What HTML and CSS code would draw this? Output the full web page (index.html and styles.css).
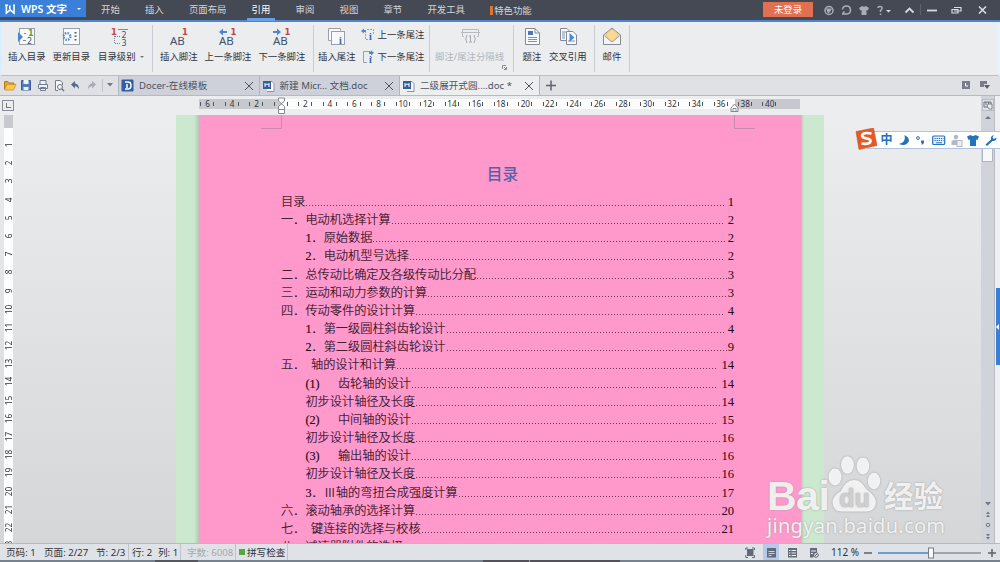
FILE: index.html
```html
<!DOCTYPE html>
<html lang="zh-CN">
<head>
<meta charset="utf-8">
<title>WPS 文字</title>
<link rel="stylesheet" href="styles.css">
</head>
<body>
<div class="app">
  <header class="titlebar">
    <div class="brand">
      <svg width="14" height="12" viewBox="0 0 14 12"><path d="M1 2.200H4M2.400 2.500V10L6.200 6.800L10 10V2.500M5.800 2.500V6M9 2.200H11" fill="none" stroke="#fff" stroke-width="1.600"/></svg>
      <b>WPS 文字</b>
      <i class="caret"></i>
    </div>
    <nav class="menu">
      <span>开始</span><span>插入</span><span>页面布局</span><span class="active">引用</span><span>审阅</span><span>视图</span><span>章节</span><span>开发工具</span><span class="special">特色功能</span>
    </nav>
    <div class="account">未登录</div>
    <svg class="winicons" width="187" height="20" viewBox="0 0 187 20" fill="none" stroke="#a9adb5" stroke-width="1.5">
      <circle cx="16" cy="10.500" r="4"/><path d="M13 8.500H19L17 12L15 13.500Z" fill="#a9adb5" stroke="none"/>
      <path d="M29 14H34A4 4 0 1 0 29.500 9.500M29.500 14L31.500 11.500"/>
      <path d="M46 8L49 6Q51 7.500 53 6L56 8L54.500 10.500L53.500 10V15H48.500V10L47.500 10.500Z" fill="#a9adb5" stroke="none"/>
      <path d="M65 8Q65 6.500 67 6.500Q69.500 6.500 69 8.700Q68.800 9.700 67.500 10.500V12M67.500 13.500V15"/><path d="M73 10H78L75.500 12.500Z" fill="#d8dade" stroke="none"/>
      <path d="M92.500 12.500L96.500 8.500L100.500 12.500" stroke="#d8dade" stroke-width="1.800"/><path d="M107.500 4V15" stroke="#5c616b" stroke-width="1"/>
      <path d="M114 10.500H124" stroke="#d8dade" stroke-width="1.800"/>
      <path d="M141 7.500H148V11H141M139 9.500H145V13H139Z" stroke="#d8dade" stroke-width="1.200"/>
      <path d="M166 6.500L173 13.500M173 6.500L166 13.500" stroke="#d8dade" stroke-width="1.700"/>
    </svg>
  </header>

  <section class="ribbon">
    <div class="group g1">
      <div class="tool"><svg width="20" height="20" viewBox="0 0 20 20"><rect x="2.500" y="1.500" width="15" height="16" fill="#f8f9fb" stroke="#9a9fa9"/><path d="M1 5L6 10L1 15Z" fill="#4f86d4"/><text x="11" y="8.500" class="ico green">1</text><text x="10" y="16.500" class="ico">2</text><path d="M7 6.500H9M6 13.500H9" stroke="#7b8aa0"/></svg><span>插入目录</span></div>
      <div class="tool"><svg width="20" height="20" viewBox="0 0 20 20"><rect x="2.500" y="1.500" width="16" height="16" fill="#f8f9fb" stroke="#9a9fa9"/><circle cx="6" cy="9.500" r="3.400" fill="none" stroke="#4f86d4" stroke-width="2.200" stroke-dasharray="1.500 1.170"/><path d="M14.500 5V14" stroke="#56647c" stroke-width="2" stroke-dasharray="1.500 2"/></svg><span>更新目录</span></div>
      <div class="tool wide"><svg width="20" height="20" viewBox="0 0 20 20"><text x="1" y="7.500" class="ico red">1</text><text x="11.500" y="10.500" class="ico">2</text><text x="11.500" y="18.500" class="ico">3</text><path d="M8 2.500H18" stroke="#5f91cf"/><path d="M4.500 9V16.500M5 9.500H10M5 16.500H10" stroke="#747d8b" stroke-dasharray="1 1"/></svg><span>目录级别<i class="caret"></i></span></div>
    </div>
    <div class="group g2">
      <div class="tool"><svg width="20" height="20" viewBox="0 0 20 20"><text x="1" y="17.500" class="ab">AB</text><text x="13" y="7.500" class="ico red">1</text></svg><span>插入脚注</span></div>
      <div class="tool"><svg width="20" height="20" viewBox="0 0 20 20"><text x="1" y="17.500" class="ab">AB</text><text x="12.500" y="7.500" class="ico red">1</text><path d="M1 5L5 1.500V4H9V6H5V8.500Z" fill="#4f86d4"/></svg><span>上一条脚注</span></div>
      <div class="tool"><svg width="20" height="20" viewBox="0 0 20 20"><text x="1" y="17.500" class="ab">AB</text><text x="12.500" y="7.500" class="ico red">1</text><path d="M9 5L5 1.500V4H1V6H5V8.500Z" fill="#4f86d4"/></svg><span>下一条脚注</span></div>
    </div>
    <div class="group g3">
      <div class="tool"><svg width="20" height="20" viewBox="0 0 20 20"><path d="M13.500 3.500V1.500H1.500V13.500H4" fill="#f8f9fb" stroke="#9a9fa9"/><rect x="4.500" y="4.500" width="13" height="13" fill="#f8f9fb" stroke="#9a9fa9"/><text x="12" y="17" class="info">i</text></svg><span>插入尾注</span></div>
      <div class="stack">
        <div><svg width="14" height="14" viewBox="0 0 14 14"><path d="M4.500 3V11.500H7M6 1.500H12.500V6" fill="none" stroke="#9a9fa9" stroke-dasharray="2 1"/><path d="M0 3L3 .5V2H5V4H3V5.500Z" fill="#4f86d4"/><text x="8" y="12" class="info">i</text></svg>上一条尾注</div>
        <div><svg width="14" height="14" viewBox="0 0 14 14"><path d="M6 12.500H2.500V1.500H9M10.500 7V8" fill="none" stroke="#9a9fa9"/><path d="M8 1.500H10V.2L13 2.800L10 5.500V4H8Z" fill="#4f86d4"/><text x="8" y="13" class="info">i</text></svg>下一条尾注</div>
      </div>
    </div>
    <div class="group g4">
      <div class="tool off"><svg width="20" height="20" viewBox="0 0 20 20" fill="none" stroke="#b8bbc1"><path d="M4 9.500H2.500V2.500H18.500V9.500H17M1 5.500H20"/><path d="M7 8Q4.500 12 7 16M14 8Q16.500 12 14 16M9 9.500L10.500 8.500V15M9 15H12" stroke="#a7aab1"/></svg><span>脚注/尾注分隔线</span></div>
      <svg class="launcher" width="5" height="5" viewBox="0 0 5 5"><path d="M.5 4V.5H4M2 2L4 4M4.500 2V4.500H2" fill="none" stroke="#6b707a" stroke-width=".8"/></svg>
    </div>
    <div class="group g5">
      <div class="tool"><svg width="20" height="20" viewBox="0 0 20 20"><path d="M3.500 1.500H13L17.500 6V17.500H3.500Z" fill="#f8f9fb" stroke="#858b96"/><path d="M13 1.500V6H17.500" fill="none" stroke="#858b96"/><path d="M6 4H11V8H6Z" fill="#4f76b8"/><path d="M6 10.500H15M6 12.500H15M6 14.500H15" stroke="#7a92b8"/></svg><span>题注</span></div>
      <div class="tool"><svg width="20" height="20" viewBox="0 0 20 20"><path d="M2.500 1.500H9L12.500 5V13.500H2.500Z" fill="#f8f9fb" stroke="#858b96"/><path d="M8.500 4.500H15L18.500 8V17.500H8.500Z" fill="#f8f9fb" stroke="#858b96"/><path d="M4 5H8M4 7H7M4 9H7M4 11H7M10 14H17" stroke="#7a92b8"/><path d="M11.500 6L16.500 10.500L11.500 15Z" fill="#4f86d4"/></svg><span>交叉引用</span></div>
    </div>
    <div class="group g6">
      <div class="tool"><svg width="20" height="20" viewBox="0 0 20 20"><path d="M1.500 8L10 1L18.500 8V17.500H1.500Z" fill="#f4f5f7" stroke="#858b96"/><path d="M4 7L10 2L16 7V10L10 15L4 10Z" fill="#f9d996" stroke="#dfad59" stroke-width=".7"/><path d="M1.500 8L10 15L18.500 8" fill="none" stroke="#858b96" stroke-width=".7"/></svg><span>邮件</span></div>
    </div>
  </section>

  <section class="tabs">
    <svg class="quick" width="118" height="19" viewBox="0 0 118 19" fill="none">
      <path d="M4.500 13V5.500H8L9.500 7H14V9" fill="#e7a129" stroke="#b97b20"/><path d="M4.500 14L7 8.500H16L13.500 14Z" fill="#ffc94d" stroke="#cf9130" stroke-width=".8"/>
      <path d="M21.500 4.500H30.500V14H21.500Z" fill="#527abc" stroke="#3d609d"/><path d="M23.500 4V8H28.500V4M23.500 14V11H28.500V14" fill="#eef3fa"/>
      <path d="M40 8V4.500H46V8M38.500 8.500H47.500V12.500H38.500ZM40.500 11.500H45.500V14.500H40.500Z" stroke="#6e7d93" fill="#eef1f5"/>
      <path d="M62.500 9V6.500L60 4.500H55.500V14.500H58" fill="#f6f7f9" stroke="#767c88"/><circle cx="60" cy="11" r="2.500" stroke="#6a7280"/><path d="M62 13L64 15" stroke="#6a7280" stroke-width="1.500"/>
      <path d="M71 8.500L75 5V7.500Q79 8 79 13Q77 10 75 10V12.500Z" fill="#59698a"/>
      <path d="M96 8.500L92 5V7.500Q88 8 88 13Q90 10 92 10V12.500Z" fill="#a6abb5"/>
      <path d="M102.500 3V16" stroke="#c0c4cd"/><path d="M107 7H113L110 10.500Z" fill="#747984"/>
    </svg>
    <div class="tab"><svg width="13" height="13" viewBox="0 0 13 13"><rect x=".5" y=".5" width="12" height="12" rx="1" fill="#315f9f"/><path d="M4 3H7Q10 3 10 6.500T7 10H4M6 5V9" stroke="#fff" stroke-width="1.500" fill="none"/></svg><span>Docer-在线模板</span><i class="close"></i></div>
    <div class="tab doc"><svg width="13" height="13" viewBox="0 0 13 13"><path d="M5.500 2.500H10L12 4.500V12.500H5" fill="#f7f8fa" stroke="#8c929d"/><rect x="1" y="2" width="8" height="8" fill="#315f9f"/><path d="M3 4V8M7 4V8M3 6L5 5L7 6" stroke="#fff" fill="none"/></svg><span>新建 Micr... 文档.doc</span><i class="close"></i></div>
    <div class="tab doc current"><svg width="13" height="13" viewBox="0 0 13 13"><path d="M5.500 2.500H10L12 4.500V12.500H5" fill="#f7f8fa" stroke="#8c929d"/><rect x="1" y="2" width="8" height="8" fill="#315f9f"/><path d="M3 4V8M7 4V8M3 6L5 5L7 6" stroke="#fff" fill="none"/></svg><span>二级展开式圆....doc *</span><i class="close"></i></div>
    <svg width="20" height="19" viewBox="0 0 20 19"><path d="M6 9.500H16M11 4.500V14.500" stroke="#5c6370" stroke-width="1.500"/></svg>
    <svg class="tabtools" width="34" height="19" viewBox="0 0 34 19"><rect x="2" y="5" width="8" height="8" fill="#777d8b"/><path d="M5.500 7V10H8" stroke="#fff" fill="none"/><path d="M20 5H27V8H24V11H20Z" fill="#777d8b"/><path d="M24 9H30L27 13Z" fill="#565d6c"/></svg>
  </section>

  <main class="work">
    <aside class="left">
      <div class="tabstop"></div>
      <div class="vruler"><div class="vtop"></div><div class="vnums"><span>1</span><span>2</span><span>3</span><span>4</span><span>5</span><span>6</span><span>7</span><span>8</span><span>9</span><span>10</span><span>11</span><span>12</span><span>13</span><span>14</span><span>15</span><span>16</span><span>17</span><span>18</span><span>19</span><span>20</span><span>21</span><span>22</span><span>23</span></div></div>
    </aside>
    <div class="center">
      <div class="hruler">
        <div class="hnums"><span>6</span><span>4</span><span>2</span><span></span><span>2</span><span>4</span><span>6</span><span>8</span><span>10</span><span>12</span><span>14</span><span>16</span><span>18</span><span>20</span><span>22</span><span>24</span><span>26</span><span>28</span><span>30</span><span>32</span><span>34</span><span>36</span><span>38</span><span>40</span></div>
        <svg class="indent first" width="9" height="18" viewBox="0 0 9 18"><path d="M1.500 1H7.500V4L1.500 9.500V12.500H7.500V9.500L1.500 4ZM1.500 12.500H7.500V16.500H1.500Z" fill="#fff" stroke="#858890"/></svg>
        <svg class="indent last" width="9" height="9" viewBox="0 0 9 9"><path d="M1 8.500V5L4.500 1L8 5V8.500ZM3 8V5.500H6V8" fill="#fff" stroke="#858890"/></svg>
      </div>
      <div class="desk">
        <article class="page">
          <i class="crop cl"></i><i class="crop cr"></i>
          <h1>目录</h1>
          <ol class="toc">
            <li><span>目录</span><i></i><b class="sp">1</b></li>
            <li><em>一．</em><span>电动机选择计算</span><i></i><b class="sp">2</b></li>
            <li class="sub"><em>1．</em><span>原始数据</span><i></i><b class="sp">2</b></li>
            <li class="sub"><em>2．</em><span>电动机型号选择</span><i></i><b class="sp">2</b></li>
            <li><em>二．</em><span>总传动比确定及各级传动比分配</span><i></i><b>3</b></li>
            <li><em>三．</em><span>运动和动力参数的计算</span><i></i><b>3</b></li>
            <li><em>四．</em><span>传动零件的设计计算</span><i></i><b class="sp">4</b></li>
            <li class="sub"><em>1．</em><span>第一级圆柱斜齿轮设计</span><i></i><b class="sp">4</b></li>
            <li class="sub"><em>2．</em><span>第二级圆柱斜齿轮设计</span><i></i><b>9</b></li>
            <li class="w"><em>五．</em><span>轴的设计和计算</span><i></i><b class="sp">14</b></li>
            <li class="sub par"><em>(1)</em><span>齿轮轴的设计</span><i></i><b class="sp">14</b></li>
            <li class="sub"><span>初步设计轴径及长度</span><i></i><b>14</b></li>
            <li class="sub par"><em>(2)</em><span>中间轴的设计</span><i></i><b class="sp">15</b></li>
            <li class="sub"><span>初步设计轴径及长度</span><i></i><b>16</b></li>
            <li class="sub par"><em>(3)</em><span>输出轴的设计</span><i></i><b class="sp">16</b></li>
            <li class="sub"><span>初步设计轴径及长度</span><i></i><b>16</b></li>
            <li class="sub"><em>3．</em><span>Ⅲ轴的弯扭合成强度计算</span><i></i><b class="sp">17</b></li>
            <li><em>六．</em><span>滚动轴承的选择计算</span><i></i><b>20</b></li>
            <li class="w"><em>七．</em><span>键连接的选择与校核</span><i></i><b>21</b></li>
            <li><em>八．</em><span>减速器附件的选择</span><i></i><b>22</b></li>
          </ol>
        </article>
      </div>
    </div>
    <div class="scroll">
      <svg width="14" height="32" viewBox="0 0 14 32"><rect x="1.500" y="3.500" width="11" height="11" fill="#dfe1e7" stroke="#b7bbc6"/><path d="M3 6H10V11H3ZM5 6V9M7.500 6V9" fill="none" stroke="#6b707d"/><path d="M7 8H11V13H8L6 10Z" fill="#e9ebef" stroke="#6b707d" stroke-width=".8"/><path d="M4 23H10L7 20Z" fill="#70778a"/></svg>
      <div class="thumb"></div>
      <svg class="nav" width="14" height="46" viewBox="0 0 14 46" fill="#70778a"><path d="M4 5H10L7 8.500ZM5 17L7 14.500L9 17ZM5 20L7 17.500L9 20ZM5 37L7 39.500L9 37ZM5 40L7 42.500L9 40Z"/><circle cx="7" cy="28" r="1.700" fill="none" stroke="#70778a"/></svg>
    </div>
    <div class="edge"><div class="drawer"></div></div>

    <div class="ime">
      <svg class="sogou" width="23" height="22" viewBox="0 0 23 22"><path d="M1 3.500L18.500 0L22 17.500L4 21.500Z" fill="#e65a26" stroke="#c94a1d" stroke-width=".5"/><path d="M16.500 5.500Q8 4 7 7.500Q7 9.700 12 10.500Q17 11.500 15 14.500Q13 16.500 6.500 15.500" fill="none" stroke="#fff" stroke-width="2.700"/></svg>
      <b>中</b>
      <svg width="106" height="16" viewBox="0 0 106 16" fill="#2671bb"><path d="M10.500 3Q12.500 10 5 12Q12 15 15 9Q15 5 10.500 3Z"/><circle cx="24" cy="6" r="1.400" fill="none" stroke="#2671bb"/><path d="M27 8.500H30Q30.500 12 27.500 13Q28.500 11.500 27 10.500Z"/><rect x="38.700" y="4" width="12" height="8.500" rx="1" fill="#e7f0fa" stroke="#2671bb" stroke-width="1.200"/><path d="M40.500 6.500H49.500M40.500 8.500H49.500" stroke="#2671bb" stroke-dasharray="1.300 .8" stroke-width="1.200"/><path d="M42 10.800H48" stroke="#2671bb"/><g fill="#b4b9c7"><circle cx="62" cy="5" r="2.300"/><path d="M57.500 9Q62 6.500 65 9V13H57.500Z"/><rect x="63" y="8.500" width="5" height="6" fill="#eef0f4" stroke="#b4b9c7"/></g><path d="M73 4.500L76.500 3Q79 5 81.500 3L85 4.500L83.500 8L82 7.500V14H76V7.500L74.500 8Z"/><path d="M91.500 12.500L97 7.500Q96 4 100 3L98.500 5.500L100 7L102.500 5.500Q102.500 9.500 98.500 9L93 14Z"/></svg>
    </div>
    <div class="watermark">
      <div class="wmtop"><strong>Bai</strong><div class="paw"><svg width="53" height="57" viewBox="0 0 53 57"><ellipse cx="7" cy="22" rx="6.500" ry="8.500"/><ellipse cx="19.500" cy="10" rx="6.300" ry="8.800"/><ellipse cx="35" cy="11" rx="6.300" ry="8.500"/><ellipse cx="46" cy="26" rx="6.200" ry="8.300"/><path d="M26 25Q33 25 38 34Q47 40 48 47Q47 57 37 56.500H15Q5 57 4.500 47Q5 41 13 36Q18 25 26 25Z"/></svg><span>du</span></div><em>经验</em></div>
      <div class="url">jingyan.baidu.com</div>
    </div>
  </main>

  <footer class="status">
    <span class="s1">页码: 1</span><span class="s2">页面: 2/27</span><span class="s3">节: 2/3</span><span class="s4">行: 2</span><span class="s5">列: 1</span><span class="s6">字数: 6008</span><span class="s7">拼写检查</span>
    <svg class="views" width="82" height="17" viewBox="0 0 82 17" fill="none" stroke="#626a77"><rect x="18" width="16" height="17" fill="#b6c9e8" stroke="none"/><path d="M.8 6V4H3M7 4H9.500V6M9.500 11V13.500H7M3 13.500H.8V11" /><rect x="2.500" y="5.500" width="5.500" height="6" fill="#626a77"/><path d="M22 4H31V13.500H22Z" fill="#626a77" stroke="none"/><path d="M23.500 7.500H29.500M23.500 9.500H29.500M23.500 11.500H26.500" stroke="#d5dfef" stroke-width=".9"/><path d="M43 4H52V13.500H43Z" fill="#626a77" stroke="none"/><path d="M44 6.500H45.500M46.500 6.500H51M44 9H45.500M46.500 9H51M44 11.500H45.500M46.500 11.500H51" stroke="#eef0f3"/><path d="M65 4H72V8L68 13.500H65Z" fill="#626a77" stroke="none"/><path d="M66 7H71M66 9.500H68" stroke="#eef0f3"/><circle cx="71" cy="11" r="2.300" fill="#dfe2e6"/><path d="M70 12L72 10"/></svg>
    <span class="pct">112 %</span>
    <svg class="zoom" width="136" height="17" viewBox="0 0 136 17"><path d="M2 9H10M126 9H134M130 5V13" stroke="#59616d" stroke-width="1.500"/><path d="M69 9H119" stroke="#8a929d" stroke-width="1.500"/><path d="M16 9H69" stroke="#4b83cf" stroke-width="1.500"/><rect x="66.500" y="4" width="5" height="10" fill="#fafafa" stroke="#777e89"/></svg>
  </footer>
  <div class="taskbar"></div>
</div>
</body>
</html>
```
FILE: styles.css
```css
* { box-sizing: border-box; }
body { margin: 0; background: #ecedef; color: #30333a; font: 9.4px/14px "Noto Sans", "Noto Sans CJK SC", sans-serif; }
.app { width: 1000px; height: 562px; overflow: hidden; display: flex; flex-direction: column; }
svg { display: block; flex: none; }
i, em { font-style: normal; }
.caret { display: inline-block; border: 2.5px solid transparent; border-top-color: currentColor; border-bottom: 0; }

.titlebar { height: 22px; flex: none; display: flex; background: #444954; border-bottom: 2px solid #4c85cd; }
.brand { width: 86px; height: 17px; padding-left: 4px; display: flex; align-items: center; background: #3b80d8; color: #fff; font-size: 10.5px; white-space: nowrap; }
.brand b { margin-left: 3px; width: 56px; font-weight: 600; }
.menu { display: flex; gap: 25.2px; margin-left: 15px; color: #d3d5d9; line-height: 20px; height: 21px; white-space: nowrap; }
.menu .active { padding: 0 5px; margin: 0 -5px; border-bottom: 3px solid #66a0e6; line-height: 20px; color: #fff; }
.menu .special { border-left: 3px solid #df762f; padding-left: 1px; height: 9px; line-height: 9px; margin-top: 6px; }
.account { width: 50px; height: 15px; margin: 2px 0 0 auto; background: #e17051; color: #fff; text-align: center; line-height: 15px; }

.ribbon { height: 54px; flex: none; display: flex; border-bottom: 1px solid #b8becb; background: #ecedef; border-left: 2px solid #d7efff; border-right: 3px solid #e4f2fd; }
.group { display: flex; gap: 7px; height: 47px; margin-top: 3px; padding-top: 2px; border-right: 1px solid #c9ccd2; position: relative; }
.tool { display: flex; flex-direction: column; align-items: center; white-space: nowrap; }
.tool span { margin-top: 3px; }
.tool.wide { align-items: flex-start; margin-left: 1px; }
.tool.wide svg { margin-left: 12px; }
.tool .caret { margin: 0 0 2px 4px; color: #777; border-width: 2px; border-bottom: 0; }
.off { color: #b2b5ba; }
.g1 { width: 151px; padding-left: 6px; }
.g2 { width: 161px; padding-left: 7px; }
.g3 { width: 116px; padding-left: 4px; }
.g4 { width: 84px; padding-left: 5px; }
.g5 { width: 81px; padding-left: 8px; }
.g6 { width: 35px; padding-left: 7px; }
.g3 .tool { margin-right: -2px; }
.stack { display: flex; flex-direction: column; gap: 8px; padding-top: 1px; white-space: nowrap; }
.stack div { display: flex; gap: 3px; height: 14px; }
.launcher { position: absolute; right: 6px; bottom: 2px; }
.ico { font: 8px "DejaVu Sans", sans-serif; fill: #42546f; }
.red { font-weight: bold; font-size: 8.5px; fill: #c34745; }
.green { fill: #50a247; font-weight: bold; }
.ab { font: 11.5px "Noto Sans", sans-serif; fill: #42526d; }
.info { font: bold 10px "Liberation Serif", serif; fill: #2c65b1; }

.tabs { height: 20px; flex: none; display: flex; background: #dfe1e5; border-bottom: 1px solid #b4b9c3; }
.tab { width: 140.5px; height: 19px; flex: none; display: flex; align-items: center; background: #cfd1da; border-left: 1px solid #afb4c0; padding-left: 2px; white-space: nowrap; color: #4b5260; font-size: 9.6px; }
.tab span { margin-left: 5px; }
.tab .close { margin: 0 6px 0 auto; width: 8px; height: 8px; background: linear-gradient(45deg, transparent 46%, #4b5260 46% 55%, transparent 55%), linear-gradient(-45deg, transparent 46%, #4b5260 46% 55%, transparent 55%); }
.tab.current { background: #edeef0; border-right: 1px solid #afb4c0; }
.tabtools { margin-left: auto; margin-right: 6px; }

.work { height: 447px; flex: none; display: flex; position: relative; overflow: hidden; background: linear-gradient(#ecedef, #ecedef 20px, #d5d6d8); }
.left { width: 14px; padding: 4px 0 0 2px; }
.tabstop { width: 12px; height: 11px; border: 1px solid #898e98; display: grid; place-items: center; }
.tabstop::after { content: ""; width: 4px; height: 4px; border: solid #777; border-width: 0 0 1px 1px; }
.vruler { width: 9px; height: 432px; margin: 4px 0 0 2px; background: #fdfdfd; overflow: hidden; color: #333; }
.vtop { height: 13px; background: #c7c9cf; }
.vnums { display: flex; flex-direction: column; padding-top: 8px; }
.vnums span { height: 18.2px; flex: none; width: 9px; writing-mode: vertical-rl; transform: rotate(180deg); text-align: center; font-size: 8.3px; line-height: 9px; }
.center { width: 967px; padding: 3px 0 0 162px; }
.hruler { margin-left: 23px; width: 601px; height: 10px; background: linear-gradient(90deg, #c7c9cf 82px, #fdfdfd 82px 536px, #c7c9cf 536px); position: relative; }
.hnums { display: flex; margin-left: -3.6px; font-size: 8.2px; line-height: 10px; color: #333; }
.hnums span { width: 24.45px; flex: none; text-align: center; height: 10px; background: linear-gradient(#555, #555) 5px 3px / 1px 4px no-repeat, linear-gradient(#555, #555) 18px 3px / 1px 4px no-repeat; }
.indent { position: absolute; }
.first { left: 78px; top: -2px; }
.last { left: 531px; top: 4px; }
.desk { width: 648px; height: 431px; margin-top: 6px; padding-left: 23px; background: linear-gradient(90deg, #cce8cf 18px, #b3c7b7 23px, #b3c7b7 625px, #cce8cf 628px); overflow: hidden; }
.page { width: 602px; height: 431px; background: #ff99cc; position: relative; padding: 49px 67px 0 82px; }
.crop { position: absolute; top: 0; width: 21px; height: 14px; border-bottom: 1px solid #c98aaf; }
.cl { left: 62px; border-right: 1px solid #c98aaf; }
.cr { left: 535px; border-left: 1px solid #c98aaf; }
h1 { margin: 0 0 7px; padding-right: 10px; text-align: center; font: 500 15.7px/22px "Liberation Serif", "Noto Sans CJK SC", serif; color: #5660a8; }
.toc { list-style: none; margin: 0; padding: 0; color: #1d0812; font: 12.2px/18.17px "Liberation Serif", "Noto Sans CJK SC", serif; font-weight: 350; }
.toc span, .toc em { -webkit-text-stroke: .15px #1d0812; font-weight: 300; }
.toc li { display: flex; height: 18.17px; white-space: nowrap; }
.toc em { width: 24.4px; flex: none; }
.toc .sub { padding-left: 24.4px; }
.toc .sub em { width: 18.3px; }
.toc .w em { width: 30px; }
.toc .par em { width: 32.5px; }
.toc i { flex: 1; height: 1px; margin: 12px 0 0 1px; background: repeating-linear-gradient(90deg, #6b3853 0 1px, transparent 1px 3px); }
.toc b { font-weight: 400; font-size: 12.6px; }
.toc .sp { margin-left: 3px; }

.scroll { width: 14px; background: #d0d3da; border-right: 1px solid #b7bbc6; display: flex; flex-direction: column; }
.thumb { width: 11px; height: 14px; margin: 20px 0 0 1px; background: #f8f8fa; border: 1px solid #b2b6c0; }
.nav { margin-top: auto; }
.edge { width: 5px; background: #edeff3; }
.drawer { width: 4px; height: 77px; margin: 192px 0 0 1px; background: #3a7fd6; display: flex; align-items: center; }
.drawer::after { content: ""; border: 3px solid transparent; border-right-color: #fff; border-left: 0; }

.ime { position: absolute; left: 855px; top: 34px; width: 145px; height: 20px; display: flex; align-items: center; background: linear-gradient(transparent 1px, #b2c4dc 1px 2px, #fff 2px 18px, #b2c4dc 18px 19px, transparent 19px) 12px 0 no-repeat; color: #2671bb; }
.ime b { width: 16px; text-align: center; font-size: 12px; margin-left: 1px; }
.sogou { margin-top: -3px; }

.watermark { position: absolute; left: 767px; top: 359px; color: rgba(255,255,255,.85); text-shadow: 0 0 2px #999; white-space: nowrap; }
.wmtop { display: flex; align-items: flex-end; height: 57px; }
.wmtop strong { font: bold 41px/36px "Liberation Sans", sans-serif; width: 61px; letter-spacing: -.5px; margin-bottom: -2px; }
.paw { position: relative; }
.paw svg { fill: rgba(255,255,255,.85); filter: drop-shadow(0 0 1px #999); }
.paw span { position: absolute; left: 0; width: 53px; top: 31px; text-align: center; font: bold 25px/24px "Liberation Sans", sans-serif; color: #cfcfd1; }
.wmtop em { font: 700 29.5px/34px "Noto Sans CJK SC", sans-serif; margin-left: 3px; margin-bottom: 1px; }
.url { font: 20px/23px "Noto Sans", sans-serif; margin-top: 2px; letter-spacing: .3px; }

.status { height: 17px; flex: none; display: flex; line-height: 17px; background: #dfe2e6; border-top: 1px solid #b7bbc1; white-space: nowrap; font-size: 9.6px; }
.s1 { width: 44px; padding-left: 6px; }
.s2 { width: 52px; }
.s3 { width: 33px; border-right: 1px solid #bfc3c9; }
.s4 { width: 29px; padding-left: 3px; }
.s5 { width: 23px; border-right: 1px solid #bfc3c9; }
.s6 { width: 55px; padding-left: 6px; color: #a5a9af; border-right: 1px solid #bfc3c9; }
.s7 { width: 52px; padding-left: 3px; border-right: 1px solid #bfc3c9; display: flex; align-items: center; gap: 2px; }
.s7::before { content: ""; width: 6px; height: 6px; background: #55a83f; }
.views { margin-left: 457px; }
.pct { width: 36px; padding-left: 4px; margin-right: -1px; font-size: 10px; }
.taskbar { height: 2px; background: linear-gradient(90deg, #78828e 155px, #55595f 155px 198px, #78828e 198px 483px, #55515a 483px 529px, #999 529px 530px, #55515a 530px 620px, #78828e 620px); }
```
